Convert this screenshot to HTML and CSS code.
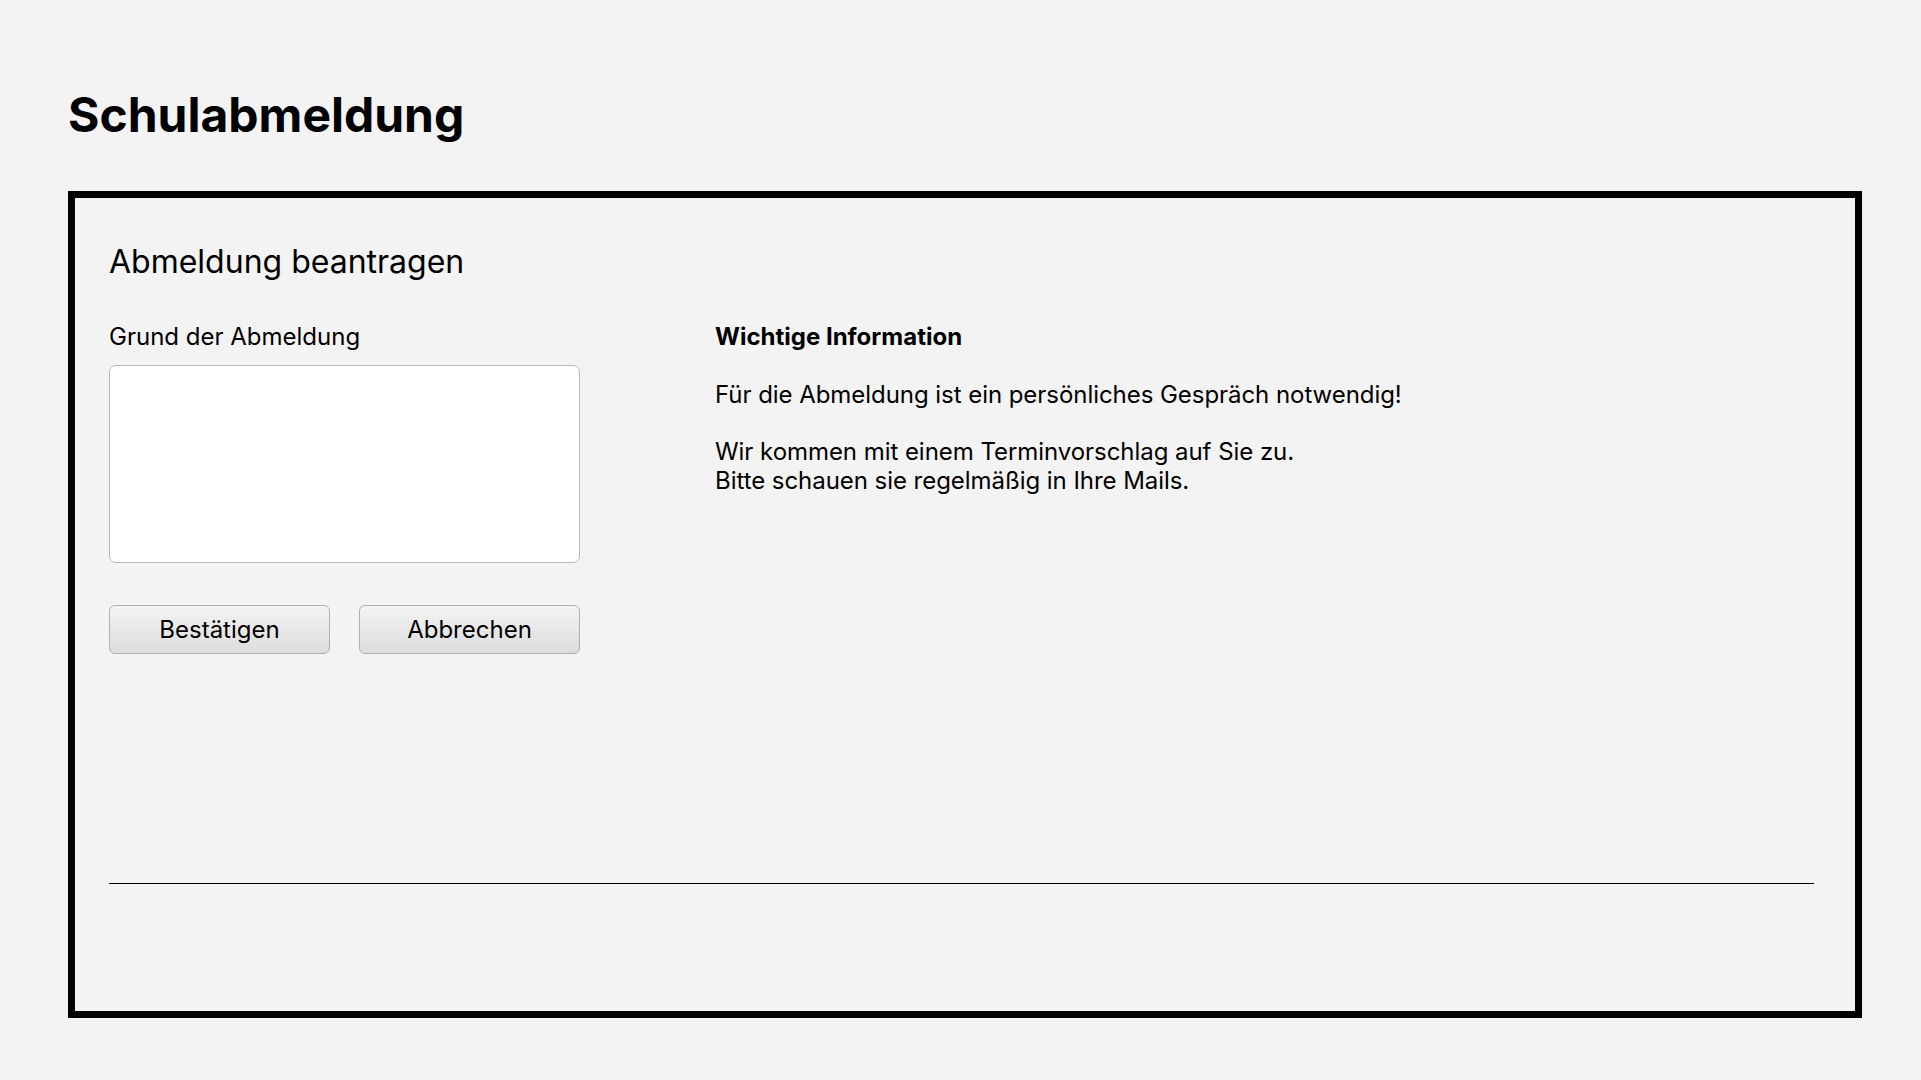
FILE: index.html
```html
<!DOCTYPE html>
<html lang="de">
<head>
<meta charset="utf-8">
<title>Schulabmeldung</title>
<link rel="stylesheet" href="styles.css">
</head>
<body>
<main class="page">
  <h1 class="page-title">Schulabmeldung</h1>
  <section class="panel">
    <h2 class="panel-title">Abmeldung beantragen</h2>
    <div class="columns">
      <form class="form-col">
        <label class="field-label" for="grund">Grund der Abmeldung</label>
        <textarea id="grund" class="field-input"></textarea>
        <div class="actions">
          <button type="button" class="btn">Bestätigen</button>
          <button type="button" class="btn">Abbrechen</button>
        </div>
      </form>
      <div class="info-col">
        <p class="info-head">Wichtige Information</p>
        <p class="info-text">Für die Abmeldung ist ein persönliches Gespräch notwendig!</p>
        <p class="info-text">Wir kommen mit einem Terminvorschlag auf Sie zu.<br>Bitte schauen sie regelmäßig in Ihre Mails.</p>
      </div>
    </div>
    <hr class="divider">
  </section>
</main>
</body>
</html>
```

FILE: styles.css
```css
* { box-sizing: border-box; }
html, body {
  margin: 0;
  padding: 0;
  background: #f3f3f3;
  color: #000;
  font-family: Inter, "Noto Sans", "Liberation Sans", sans-serif;
}
.page {
  padding: 86px 59px 0 68px;
}
.page-title {
  margin: 0;
  font-size: 48px;
  font-weight: 700;
  line-height: 57.6px;
}
.panel {
  margin-top: 47px;
  height: 827px;
  border: 7px solid #000;
  padding: 45px 41px 0 34px;
  display: flex;
  flex-direction: column;
}
.panel-title {
  margin: 0;
  font-size: 32px;
  font-weight: 400;
  line-height: 38.4px;
}
.columns {
  margin-top: 42px;
  display: flex;
  gap: 135px;
}
.form-col {
  width: 471px;
  display: flex;
  flex-direction: column;
}
.field-label {
  font-size: 24px;
  line-height: 28.8px;
}
.field-input {
  margin-top: 13px;
  width: 471px;
  height: 198px;
  background: #fff;
  border: 1px solid #b8b8b8;
  border-radius: 7px;
  resize: none;
  font: inherit;
}
.actions {
  margin-top: 42px;
  display: flex;
  gap: 29px;
}
.btn {
  width: 221px;
  height: 49px;
  border: 1px solid #b0b0b0;
  border-radius: 6px;
  background: linear-gradient(#f4f4f4, #dcdcdc);
  font-family: inherit;
  font-size: 24px;
  color: #000;
  padding: 0;
}
.info-col {
  font-size: 24px;
  line-height: 28.8px;
  letter-spacing: -0.05px;
}
.info-col p {
  margin: 0 0 28.8px 0;
}
.info-head {
  font-weight: 700;
  letter-spacing: 0;
}
.divider {
  margin: auto 0 127px 0;
  border: none;
  border-top: 1px solid #000;
  height: 0;
}
```
